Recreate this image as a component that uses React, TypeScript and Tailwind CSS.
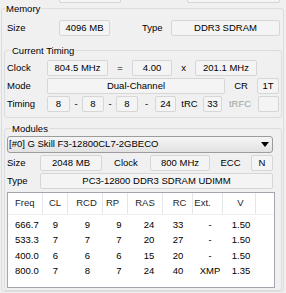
import type { ReactNode } from "react";

const rows = [
  ["666.7", "9", "9", "9", "24", "33", "-", "1.50"],
  ["533.3", "7", "7", "7", "20", "27", "-", "1.50"],
  ["400.0", "6", "6", "6", "15", "20", "-", "1.50"],
  ["800.0", "7", "8", "7", "24", "40", "XMP", "1.35"],
];

const heads = ["Freq", "CL", "RCD", "RP", "RAS", "RC", "Ext.", "V"];

const headCls = [
  "text-left pl-[7px]",
  "text-center",
  "text-center pl-[3px]",
  "text-center pr-[5px]",
  "text-center",
  "text-center pl-[4px]",
  "text-center pr-[10px]",
  "text-center pl-[3px]",
];

const cellCls = [
  "text-left pl-[7px]",
  "text-center",
  "text-center pl-[4px]",
  "text-center pl-[7px]",
  "text-center pl-[7px]",
  "text-center",
  "text-center pl-[4px]",
  "text-center pl-[3px]",
];

function Field({ w, children }: { w: string; children?: ReactNode }) {
  return (
    <div
      className={`${w} flex h-[16px] shrink-0 items-center justify-center rounded-[2px] border border-[#d6d6d6] bg-[#f4f4f4] leading-none`}
    >
      {children}
    </div>
  );
}

function Label({ w, center, gray, children }: { w: string; center?: boolean; gray?: boolean; children: ReactNode }) {
  return (
    <span className={`${w} shrink-0 ${center ? "text-center" : ""} ${gray ? "text-[#a3a3a3]" : ""}`}>{children}</span>
  );
}

export default function App() {
  return (
    <div className="h-[293px] w-[286px] overflow-hidden bg-[#f0f0f0] font-['Liberation_Sans',Arial,sans-serif] text-[9.5px] text-black">
      {/* tail of the group above */}
      <div className="-mt-[13px] flex items-center">
        <div className="w-[59px]" />
        <Field w="w-[62px]">06/01/10</Field>
        <Label w="w-[66px]" center>SPD Version</Label>
        <Field w="w-[93px]">1.0</Field>
      </div>

      <fieldset className="ml-[1px] w-[283px] rounded-[3px] border border-[#d9dde0]">
        <legend className="ml-[3px] px-[1px] leading-[11px]">Memory</legend>

        <div className="mt-[6px] flex items-center">
          <Label w="w-[57px] pl-[5px]">Size</Label>
          <Field w="w-[51px]">4096 MB</Field>
          <Label w="w-[61px] pl-[32px]">Type</Label>
          <Field w="w-[109px]">DDR3 SDRAM</Field>
        </div>

        <fieldset className="mt-[9px] ml-[2px] w-[278px] rounded-[3px] border border-[#d9dde0] pb-[5px]">
          <legend className="ml-[6px] px-[1px] leading-[11px]">Current Timing</legend>
          <div className="mt-[4px] flex flex-col gap-[2px]">
            <div className="flex items-center">
              <Label w="w-[42px] pl-[2px]">Clock</Label>
              <Field w="w-[61px]">804.5 MHz</Field>
              <Label w="w-[24px]" center>=</Label>
              <Field w="w-[40px]">4.00</Field>
              <Label w="w-[23px]" center>x</Label>
              <Field w="w-[62px]">201.1 MHz</Field>
            </div>
            <div className="flex items-center">
              <Label w="w-[42px] pl-[2px]">Mode</Label>
              <Field w="w-[178px]">Dual-Channel</Field>
              <Label w="w-[32px]" center>CR</Label>
              <Field w="w-[22px]">1T</Field>
            </div>
            <div className="flex items-center">
              <Label w="w-[42px] pl-[2px]">Timing</Label>
              <Field w="w-[23px]">8</Field>
              <Label w="w-[12px]" center>-</Label>
              <Field w="w-[22px]">8</Field>
              <Label w="w-[12px]" center>-</Label>
              <Field w="w-[22px]">8</Field>
              <Label w="w-[17px]" center>-</Label>
              <Field w="w-[21px]">24</Field>
              <Label w="w-[27px]" center>tRC</Label>
              <Field w="w-[19px]">33</Field>
              <Label w="w-[36px]" center gray>tRFC</Label>
              <Field w="w-[21px]" />
            </div>
          </div>
        </fieldset>

        <fieldset className="mt-[5px] ml-[2px] w-[278px] rounded-[3px] border border-[#d9dde0] pb-[2px]">
          <legend className="ml-[6px] px-[1px] leading-[11px]">Modules</legend>

          <div className="mt-[2px] ml-[2px] flex h-[17px] w-[266px] items-center justify-between rounded-[3px] border border-[#9c9c9c] bg-linear-to-b from-[#f5f5f5] to-[#e2e2e2] pr-[3px] pl-[1px]">
            <span>[#0] G Skill F3-12800CL7-2GBECO</span>
            <svg width="8" height="5" viewBox="0 0 8 5">
              <path d="M0 0H8L4 5Z" fill="#000" />
            </svg>
          </div>

          <div className="mt-[2px] flex items-center">
            <Label w="w-[35px] pl-[2px]">Size</Label>
            <Field w="w-[62px]">2048 MB</Field>
            <Label w="w-[48px]" center>Clock</Label>
            <Field w="w-[60px]">800 MHz</Field>
            <Label w="w-[41px]" center>ECC</Label>
            <Field w="w-[22px]">N</Field>
          </div>

          <div className="mt-[2px] flex items-center">
            <Label w="w-[35px] pl-[2px]">Type</Label>
            <Field w="w-[233px]">PC3-12800 DDR3 SDRAM UDIMM</Field>
          </div>

          <div className="mt-[3px] ml-[2px] h-[96px] w-[268px] border border-[#a3a7ad] bg-white">
            <div className="grid h-[22px] grid-cols-[35px_25px_35px_25px_35px_30px_30px_33px_1fr] border-b border-[#eef0f2] text-[#1e1e1e]">
              {heads.map((h, i) => (
                <div key={h} className={`flex items-center border-r border-[#e3e6ea] ${headCls[i]}`}>
                  <span className="w-full">{h}</span>
                </div>
              ))}
              <div />
            </div>
            <div className="pt-[2px]">
              {rows.map((r) => (
                <div
                  key={r[0]}
                  className="grid grid-cols-[35px_25px_35px_25px_35px_30px_30px_33px_1fr] leading-[15.33px]"
                >
                  {r.map((v, i) => (
                    <span key={i} className={cellCls[i]}>
                      {v}
                    </span>
                  ))}
                </div>
              ))}
            </div>
          </div>
        </fieldset>
      </fieldset>
    </div>
  );
}
